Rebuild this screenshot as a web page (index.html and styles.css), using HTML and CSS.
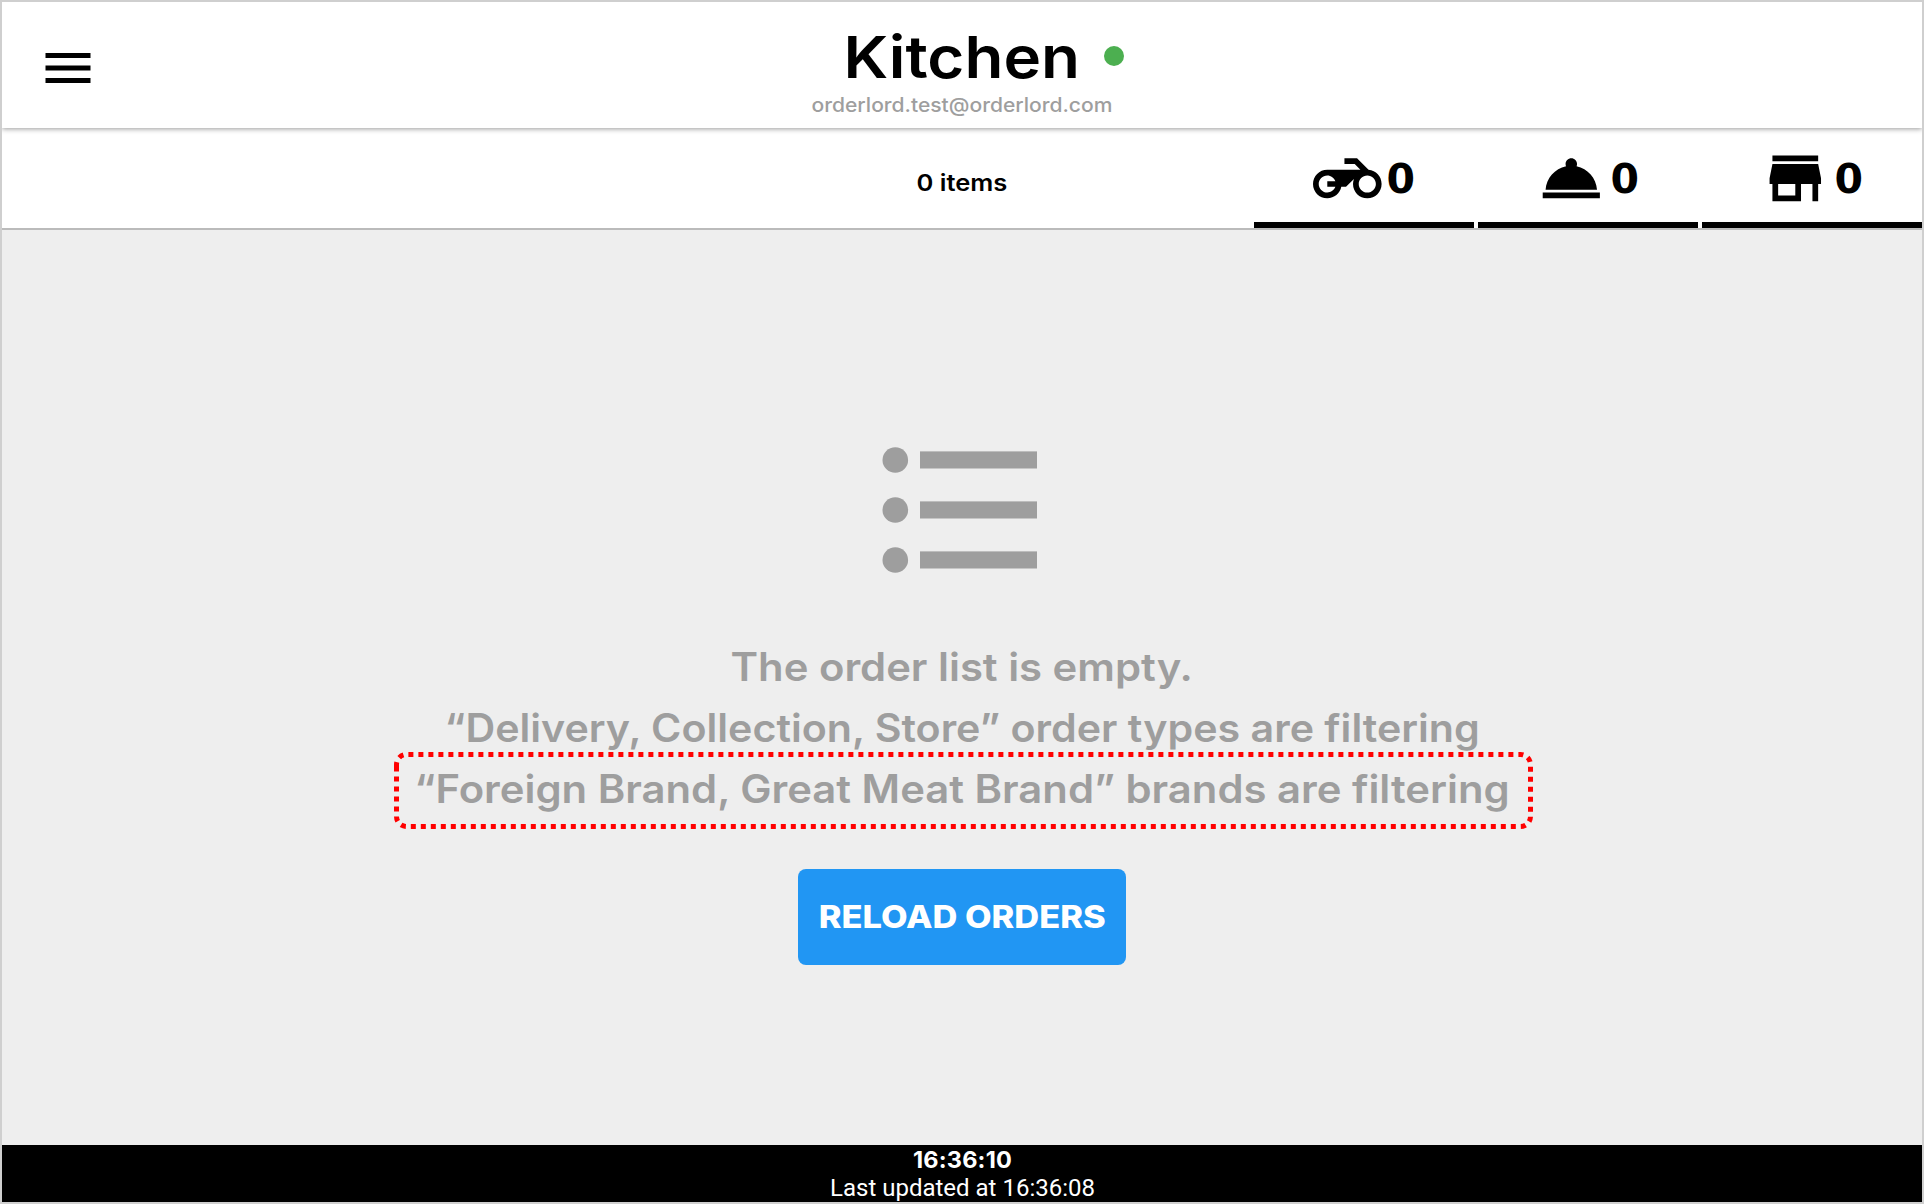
FILE: index.html
```
<!DOCTYPE html>
<html lang="en">
<head>
<meta charset="utf-8">
<title>Kitchen</title>
<link rel="stylesheet" href="styles.css">
</head>
<body>
<div class="app">
  <header class="header">
    <svg class="menu" viewBox="0 0 24 24"><path d="M3 18h18v-2H3v2zm0-5h18v-2H3v2zm0-7v2h18V6H3z"/></svg>
    <h1 class="title"><span class="wide">Kitchen</span><span class="status"></span></h1>
    <p class="email">orderlord.test@orderlord.com</p>
  </header>

  <section class="bar">
    <div></div>
    <p class="count">0 items</p>
    <nav class="tabs">
      <div class="tab">
        <svg viewBox="0 0 24 24"><path d="M19.44 9.03L15.41 5H11v2h3.59l2 2H5c-2.8 0-5 2.2-5 5s2.2 5 5 5c2.46 0 4.45-1.69 4.9-4h1.65l2.77-2.77c-.21.54-.32 1.14-.32 1.77 0 2.8 2.2 5 5 5s5-2.2 5-5c0-2.65-1.97-4.77-4.56-4.97zM7.82 15C7.4 16.15 6.28 17 5 17c-1.63 0-3-1.37-3-3s1.37-3 3-3c1.28 0 2.4.85 2.82 2H5v2h2.82zM19 17c-1.66 0-3-1.34-3-3s1.34-3 3-3 3 1.34 3 3-1.34 3-3 3z"/></svg>
        <span>0</span>
      </div>
      <div class="tab">
        <svg viewBox="0 0 24 24"><path d="M2 17h20v2H2zm11.84-9.21c.1-.24.16-.51.16-.79 0-1.1-.9-2-2-2s-2 .9-2 2c0 .28.06.55.16.79C6.25 8.6 3.27 11.93 3 16h18c-.27-4.07-3.25-7.4-7.16-8.21z"/></svg>
        <span>0</span>
      </div>
      <div class="tab">
        <svg viewBox="0 0 24 24"><path d="M20 4H4v2h16V4zm1 10v-2l-1-5H4l-1 5v2h1v6h10v-6h4v6h2v-6h1zm-9 4H6v-4h6v4z"/></svg>
        <span>0</span>
      </div>
    </nav>
  </section>

  <main class="empty">
    <svg class="list" viewBox="0 0 160 126">
      <circle cx="13.3" cy="13" r="12.8"/><rect x="38" y="4.4" width="117" height="17.1"/>
      <circle cx="13.3" cy="63" r="12.8"/><rect x="38" y="54.4" width="117" height="17.1"/>
      <circle cx="13.3" cy="113" r="12.8"/><rect x="38" y="104.4" width="117" height="17.1"/>
    </svg>
    <p class="line"><span class="wide">The order list is empty.</span></p>
    <p class="line types"><span class="wide">“Delivery, Collection, Store” order types are filtering</span></p>
    <p class="line brands"><span class="wide">“Foreign Brand, Great Meat Brand” brands are filtering</span>
      <svg class="outline" viewBox="0 0 1139 77"><path d="M2.5 15V12.5A10 10 0 0 1 12.5 2.5H1126.5A10 10 0 0 1 1136.5 12.5V64.5A10 10 0 0 1 1126.5 74.5H12.5A10 10 0 0 1 2.5 64.5Z"/></svg>
    </p>
    <button class="reload"><span class="wide">RELOAD ORDERS</span></button>
  </main>

  <footer class="footer">
    <p class="clock">16:36:10</p>
    <p class="updated">Last updated at 16:36:08</p>
  </footer>
</div>
</body>
</html>
```
FILE: styles.css
```
* { box-sizing: border-box; }

body {
  margin: 0;
  font-family: Inter, "Liberation Sans", sans-serif;
  color: #000;
}

h1, p { margin: 0; }

.app {
  height: 1204px;
  display: flex;
  flex-direction: column;
  border: 2px solid #cfcfcf;
  background: #eee;
}

/* Widened letterforms for headings and messages */
.wide {
  display: inline-block;
  transform: scaleX(1.072);
}

.header {
  position: relative;
  z-index: 1;
  flex: none;
  height: 126px;
  padding-top: 25px;
  display: flex;
  flex-direction: column;
  align-items: center;
  background: #fff;
  box-shadow: 0 1px 5px rgba(0, 0, 0, .4);
  clip-path: inset(0 0 -7px 0);
}

.menu {
  position: absolute;
  left: 36px;
  top: 36px;
  width: 60px;
  height: 60px;
}

.title {
  position: relative;
  font-size: 58px;
  line-height: 60px;
  font-weight: 600;
}

.title .wide { transform: scaleX(1.098); }

.status {
  position: absolute;
  right: -54px;
  top: 19px;
  width: 20px;
  height: 20px;
  border-radius: 50%;
  background: #4caf50;
}

.email {
  margin-top: 6px;
  font-size: 20px;
  line-height: 24px;
  font-weight: 500;
  color: #9e9e9e;
  transform: scaleX(1.052);
}

.bar {
  flex: none;
  height: 102px;
  display: grid;
  grid-template-columns: 1fr auto 1fr;
  background: #fff;
  border-bottom: 2px solid #bbb;
}

.count {
  align-self: center;
  padding-top: 9px;
  font-size: 23px;
  line-height: 28px;
  font-weight: 600;
  transform: scaleX(1.11);
}

.tabs {
  display: flex;
  justify-content: flex-end;
  gap: 4px;
}

.tab {
  width: 220px;
  padding-left: 59px;
  display: flex;
  align-items: center;
  gap: 5px;
  border-bottom: 6px solid #000;
  font: bold 41px/48px "DejaVu Sans", sans-serif;
}

.tab svg {
  width: 68.6px;
  height: 68.6px;
  margin-top: 6px;
}

.tab span { margin-top: 8px; }

.empty {
  flex: 1;
  padding-top: 217px;
  display: flex;
  flex-direction: column;
  align-items: center;
}

.list {
  width: 160px;
  height: 126px;
  margin-bottom: 63px;
  fill: #9e9e9e;
}

.line {
  font-size: 39px;
  line-height: 61px;
  font-weight: 600;
  color: #9e9e9e;
  white-space: nowrap;
}

.types .wide { transform: scaleX(1.056); }

.brands { position: relative; }

.outline {
  position: absolute;
  left: -56.6px;
  top: -6px;
  width: 1139px;
  height: 77px;
  fill: none;
  stroke: #f00;
  stroke-width: 5;
  stroke-dasharray: 5 5;
}

.reload {
  margin-top: 50px;
  width: 328px;
  height: 96px;
  padding: 0;
  border: 0;
  border-radius: 8px;
  background: #2196f3;
  color: #fff;
  font: 800 31px/38px Inter, sans-serif;
  white-space: nowrap;
}

.reload .wide { transform: scaleX(1.11); }

.footer {
  flex: none;
  height: 57px;
  padding: 1px 0 0 1px;
  background: #000;
  color: #fff;
  text-align: center;
}

.clock {
  font-size: 23.5px;
  line-height: 28px;
  font-weight: 700;
  letter-spacing: .2px;
}

.updated {
  font: 24px/28px Roboto, sans-serif;
}
```
